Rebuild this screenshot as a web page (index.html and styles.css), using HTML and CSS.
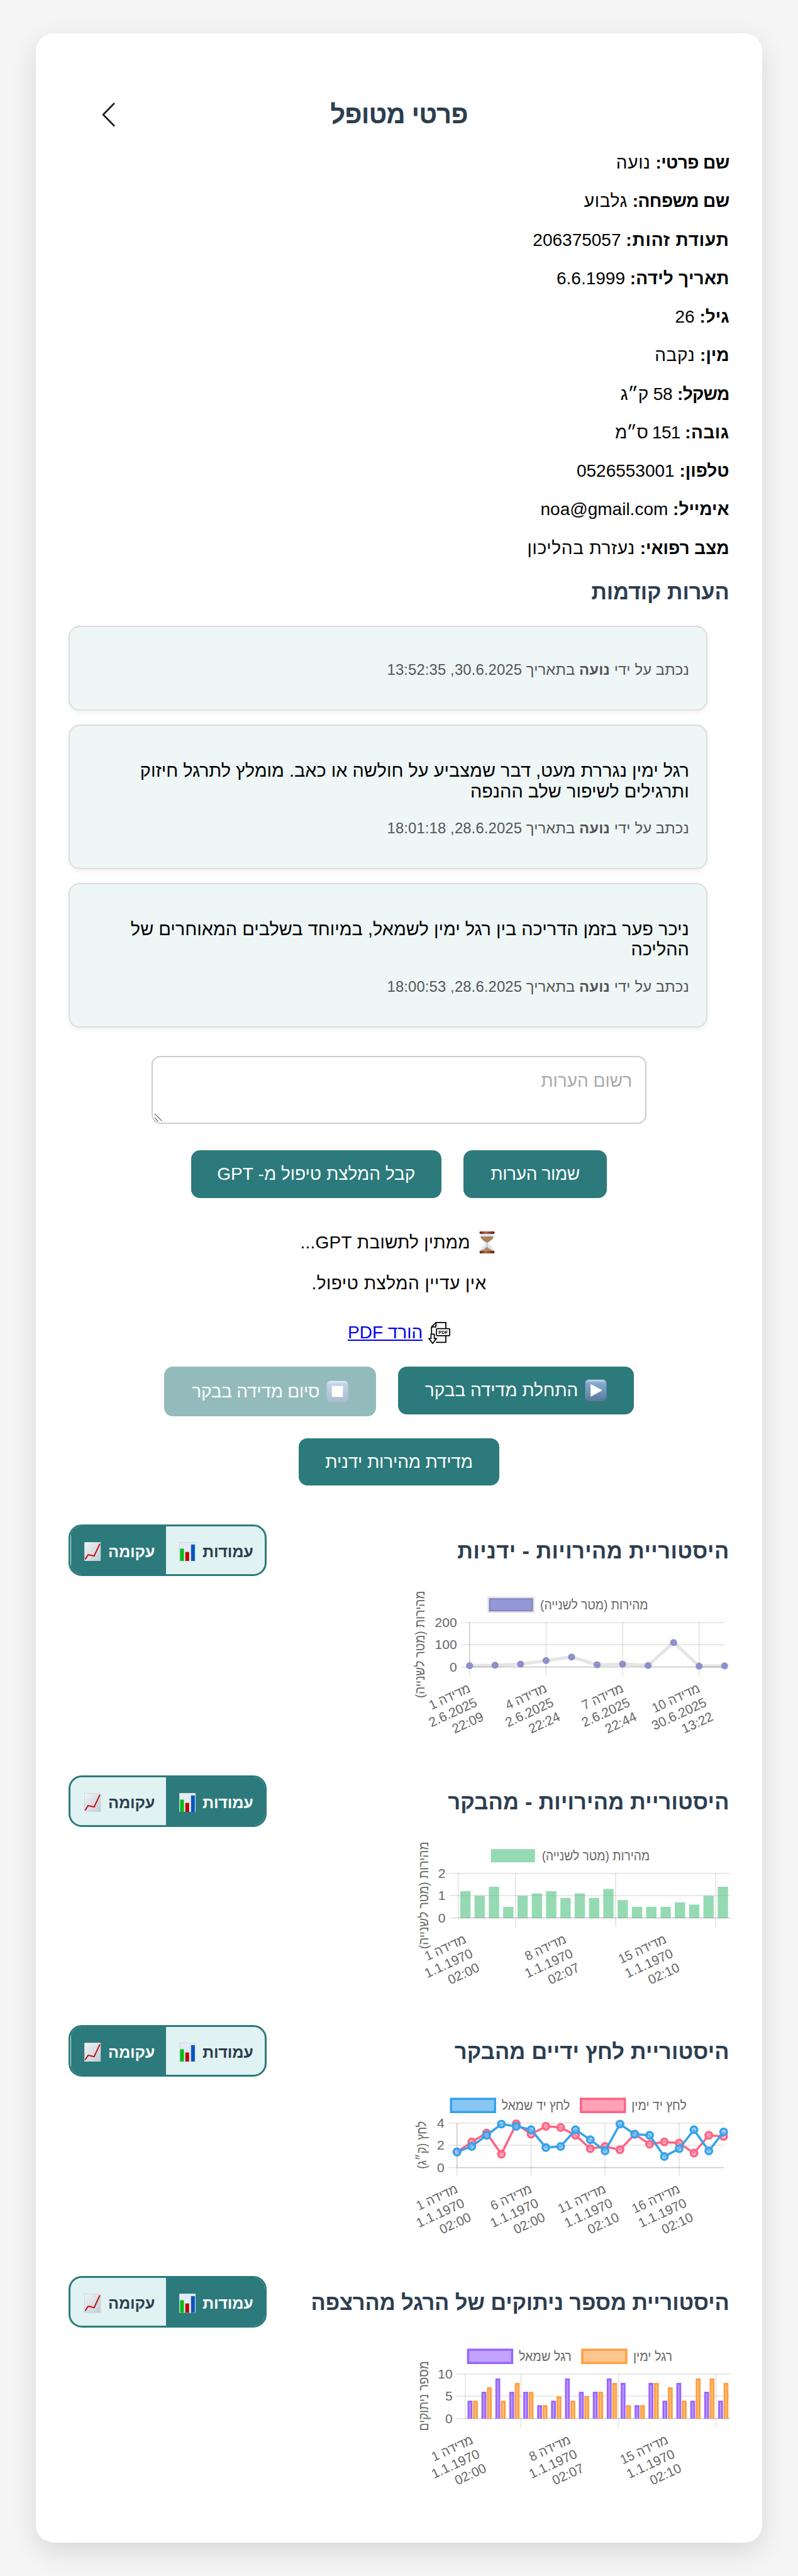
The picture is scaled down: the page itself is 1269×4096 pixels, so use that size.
FILE: index.html
```html
<!DOCTYPE html>
<html lang="he" dir="rtl">
<head>
<meta charset="utf-8">
<title>פרטי מטופל</title>
<link rel="stylesheet" href="styles.css">
</head>
<body>
<svg class="defs" width="0" height="0" aria-hidden="true">
  <defs>
    <linearGradient id="key" x1="0" y1="0" x2="0" y2="1"><stop offset="0" stop-color="#c9e2f4"/><stop offset=".16" stop-color="#84aacc"/><stop offset=".5" stop-color="#7398bc"/><stop offset="1" stop-color="#5b7797"/></linearGradient>
    <linearGradient id="paper" x1="0" y1="0" x2="1" y2="1"><stop offset="0" stop-color="#f0f4f8"/><stop offset="1" stop-color="#c3cbd3"/></linearGradient>
    <linearGradient id="wood" x1="0" x2="1" y1="0" y2="0"><stop offset="0" stop-color="#5e2412"/><stop offset=".4" stop-color="#b56a43"/><stop offset="1" stop-color="#5e2412"/></linearGradient>
    <symbol id="bars" viewBox="0 0 30 35"><rect width="30" height="35" fill="#e3ebf4" stroke="#bcc8d0" stroke-width="1"/><rect x="1.5" y="12" width="7" height="23" fill="#05bd12"/><rect x="11" y="18" width="7" height="17" fill="#bd0505"/><rect x="21.500" y="4.500" width="7" height="30.500" fill="#0556bd"/></symbol>
    <symbol id="curve" viewBox="0 0 30 35"><rect width="30" height="35" fill="url(#paper)" stroke="#bcc4cc" stroke-width="1"/><path d="M1.500 31.500 7 23l11 2.500L28.500 3" fill="none" stroke="#c20a0a" stroke-width="2.200"/></symbol>
  </defs>
</svg>
<main class="card">
  <header class="head">
    <h2 class="title">פרטי מטופל</h2>
    <svg class="back" viewBox="0 0 12 22"><path d="M11 1 1.200 11 11 21" fill="none" stroke="#1c1c1e" stroke-width="1.500" stroke-linecap="round" stroke-linejoin="round"/></svg>
  </header>
  <section class="facts">
    <p><b>שם פרטי:</b> <span>נועה</span></p>
    <p><b>שם משפחה:</b> <span>גלבוע</span></p>
    <p><b>תעודת זהות:</b> 206375057</p>
    <p><b>תאריך לידה:</b> 6.6.1999</p>
    <p><b>גיל:</b> 26</p>
    <p><b>מין:</b> <span>נקבה</span></p>
    <p><b>משקל:</b> <span>58 ק״ג</span></p>
    <p><b>גובה:</b> <span>151 ס״מ</span></p>
    <p><b>טלפון:</b> 0526553001</p>
    <p><b>אימייל:</b> <bdo dir="ltr">noa@gmail.com</bdo></p>
    <p><b>מצב רפואי:</b> <span>נעזרת בהליכון</span></p>
  </section>
  <h3 class="sub">הערות קודמות</h3>
  <section class="notes">
    <article class="note"><p class="meta">נכתב על ידי <b>נועה</b> בתאריך 30.6.2025, 13:52:35</p></article>
    <article class="note"><p class="text">רגל ימין נגררת מעט, דבר שמצביע על חולשה או כאב. מומלץ לתרגל חיזוק<br>ותרגילים לשיפור שלב ההנפה</p><p class="meta">נכתב על ידי <b>נועה</b> בתאריך 28.6.2025, 18:01:18</p></article>
    <article class="note"><p class="text">ניכר פער בזמן הדריכה בין רגל ימין לשמאל, במיוחד בשלבים המאוחרים של<br>ההליכה</p><p class="meta">נכתב על ידי <b>נועה</b> בתאריך 28.6.2025, 18:00:53</p></article>
  </section>
  <div class="field">
    <span class="placeholder">רשום הערות</span>
    <svg class="grip" viewBox="0 0 8 8"><path d="M.5.500 7.500 7.500M.5 4.500 4 8" stroke="#555" stroke-width=".7"/></svg>
  </div>
  <div class="row"><button class="btn save">שמור הערות</button><button class="btn ask">קבל המלצת טיפול מ- GPT</button></div>
  <p class="line wait"><svg class="emoji" viewBox="0 0 40 40"><path d="M8 3c0 10 8 12 10 17-2 5-10 7-10 17h24c0-10-8-12-10-17 2-5 10-7 10-17z" fill="#dfe6f3"/><path d="M8 9h24c-1 6-7 8-10 11h-4c-3-3-9-5-10-11z" fill="#a8825f"/><path d="M20 21v9" stroke="#c9a376" stroke-width="1"/><path d="M10 35c3-2 7-4 10-7 3 3 7 5 10 7z" fill="#b08a55"/><rect x="6.500" y="0" width="27" height="4.500" rx="1.500" fill="url(#wood)"/><rect x="6.500" y="35" width="27" height="5" rx="1.500" fill="url(#wood)"/></svg><span>ממתין לתשובת GPT...</span></p>
  <p class="line none"><span>אין עדיין המלצת טיפול.</span></p>
  <p class="line pdf"><svg class="emoji" viewBox="0 0 40 40" fill="none" stroke="#000" stroke-width="2"><path d="M6 21V9l8-8h18v11M32 25v12H14M6 9h8V1"/><rect x="15" y="12" width="24" height="13" rx="1.500"/><path d="M5 22h6v8h4l-7 9-7-9h4z" fill="#fff"/><text x="27" y="22" class="pdf-tag">PDF</text></svg><a href="#">הורד PDF</a></p>
  <div class="row second">
    <button class="btn start"><svg class="emoji" viewBox="0 0 40 40"><rect x=".5" y=".5" width="39" height="39" rx="7" fill="url(#key)" stroke="#5f7d9c"/><path d="M11 9.500v21.500L31 20z" fill="#fff" stroke="#fff" stroke-linejoin="round"/></svg><span>התחלת מדידה בבקר</span></button>
    <button class="btn stop" disabled><svg class="emoji" viewBox="0 0 40 40"><rect x=".5" y=".5" width="39" height="39" rx="7" fill="url(#key)" stroke="#5f7d9c"/><rect x="10" y="10" width="20" height="20" fill="#fff"/></svg><span>סיום מדידה בבקר</span></button>
  </div>
  <div class="row third"><button class="btn manual">מדידת מהירות ידנית</button></div>

  <section class="history by-hand">
    <div class="bar"><h3>היסטוריית מהירויות - ידניות</h3><div class="toggle"><span class="opt"><span>עמודות</span><svg><use href="#bars"/></svg></span><span class="opt on"><span>עקומה</span><svg><use href="#curve"/></svg></span></div></div>
    <svg class="chart" id="manual" viewBox="725 0 600 300"></svg>
  </section>
  <section class="history by-walker">
    <div class="bar"><h3>היסטוריית מהירויות - מהבקר</h3><div class="toggle"><span class="opt on"><span>עמודות</span><svg><use href="#bars"/></svg></span><span class="opt"><span>עקומה</span><svg><use href="#curve"/></svg></span></div></div>
    <svg class="chart" id="speed" viewBox="725 0 600 300"></svg>
  </section>
  <section class="history hands">
    <div class="bar"><h3>היסטוריית לחץ ידיים מהבקר</h3><div class="toggle"><span class="opt"><span>עמודות</span><svg><use href="#bars"/></svg></span><span class="opt on"><span>עקומה</span><svg><use href="#curve"/></svg></span></div></div>
    <svg class="chart" id="pressure" viewBox="725 0 600 300"></svg>
  </section>
  <section class="history feet">
    <div class="bar"><h3>היסטוריית מספר ניתוקים של הרגל מהרצפה</h3><div class="toggle"><span class="opt on"><span>עמודות</span><svg><use href="#bars"/></svg></span><span class="opt"><span>עקומה</span><svg><use href="#curve"/></svg></span></div></div>
    <svg class="chart" id="lifts" viewBox="725 0 600 300"></svg>
  </section>
</main>
<script src="charts.js"></script>
</body>
</html>
```
FILE: styles.css
```css
html { font-size: 17.5px; }
* { box-sizing: border-box; }
body { margin: 0; padding: 3rem 3.25rem 0; background: #f5f5f5; font: 1.6rem/1.2 "Liberation Sans", Arial, sans-serif; color: #000; height: 4096px; overflow: hidden; }
.defs { position: absolute; }
p, h2, h3 { margin: 0; }
.card { height: 228rem; padding: 3rem; background: #fff; border-radius: 1.6rem; box-shadow: 0 .8rem 2.4rem rgba(0,0,0,.12); }
.head { display: grid; grid-template-columns: 1fr auto 1fr; align-items: center; height: 7.04rem; padding-top: 1.8rem; }
.title { grid-column: 2; font-size: 2.4rem; letter-spacing: -1px; color: #2c3e50; }
.back { justify-self: end; width: 1.2rem; height: 2.2rem; margin-left: 3.02rem; }
.facts p { height: 3.5rem; line-height: 3.54rem; }
.facts p:nth-child(1) b, .facts p:nth-child(2) b { letter-spacing: -.6px; }
.facts p:nth-child(3) b { letter-spacing: .84px; }
.facts p:nth-child(4) b { letter-spacing: .23px; }
.facts p:nth-child(7) b { letter-spacing: -.73px; }
.facts p:nth-child(8) b { letter-spacing: .46px; }
.facts p span { letter-spacing: .7px; }
.facts p:nth-child(7) span { letter-spacing: -.26px; }
.facts p:nth-child(8) span { letter-spacing: -.77px; }
.sub { height: 4.52rem; line-height: 4.52rem; font-size: 1.97rem; letter-spacing: -.16px; color: #2c3e50; }
.notes { display: grid; gap: 1.24rem; margin: .79rem 2rem 0 0; }
.note { padding: 3.12rem 1.53rem 2.8rem; background: #eef6f6; border: 2px solid #ddd; border-radius: 1rem; box-shadow: 0 .2rem .4rem rgba(0,0,0,.05); white-space: nowrap; }
.text { font-size: 1.65rem; line-height: 1.875rem; margin-bottom: 1.65rem; letter-spacing: .03px; }
.meta { font-size: 1.36rem; line-height: 1.6rem; letter-spacing: .14px; color: #555; }
.field { position: relative; width: 45rem; height: 6.2rem; margin: 2.57rem auto 0; padding: 1.2rem; border: 2px solid #ccc; border-radius: .8rem; color: #a9a9a9; }
.grip { position: absolute; left: .15rem; bottom: .15rem; width: .75rem; height: .75rem; }
.row { display: flex; justify-content: center; gap: 2rem; height: 4.3rem; margin-top: 2.4rem; }
.btn { display: flex; align-items: center; justify-content: center; gap: .6rem; height: 4.3rem; padding: 0; border: 0; border-radius: .8rem; background: #2c7a7b; color: #fff; font: inherit; white-space: nowrap; }
.emoji { width: 2rem; height: 2rem; }
.save { width: 13.05rem; letter-spacing: -.36px; }
.ask { width: 22.75rem; }
.start { width: 21.43rem; }
.stop { width: 19.23rem; height: 4.5rem; letter-spacing: -.22px; opacity: .5; }
.manual { width: 18.22rem; letter-spacing: -.15px; }
.line { display: flex; align-items: center; justify-content: center; gap: .5rem; height: 2rem; }
.wait { margin-top: 3.05rem; letter-spacing: .24px; }
.none { margin-top: 1.72rem; letter-spacing: .5px; }
.pdf { margin-top: 2.48rem; }
.pdf-tag { font: bold 8.5px "Liberation Sans", sans-serif; fill: #000; stroke: none; text-anchor: middle; direction: ltr; }
.second { margin-top: 2.1rem; }
.third { margin-top: 2.2rem; margin-bottom: 3.5rem; }
.history { height: 22.82rem; }
.by-walker { height: 22.68rem; }
.bar { display: flex; justify-content: space-between; height: 4.7rem; }
.bar h3 { font-size: 1.97rem; line-height: 4.88rem; color: #2c3e50; white-space: nowrap; }
.by-hand h3 { letter-spacing: .4px; }
.by-walker h3 { letter-spacing: .18px; }
.hands h3 { letter-spacing: .1px; }
.feet h3 { letter-spacing: -.16px; }
.toggle { display: flex; width: 17.95rem; border: .2rem solid #2c7a7b; border-radius: 1.2rem; overflow: hidden; background: #e0f2f1; color: #2c3e50; font-size: 1.44rem; font-weight: bold; letter-spacing: -.2px; }
.opt { display: flex; align-items: center; justify-content: space-between; width: 8.6rem; padding: .25rem 1.02rem 0 1.2rem; }
.opt:first-child { width: 8.95rem; }
.opt svg { width: 1.5rem; height: 1.74rem; }
.opt.on { background: #2c7a7b; color: #fff; }
.chart { display: block; width: 30rem; height: 15rem; margin-top: 1.3rem; overflow: visible; font: 24px "Liberation Sans", Arial, sans-serif; }
.chart text { fill: #666; stroke: none; }
```
FILE: charts.js
```js
const ZERO = 139, SPAN = 81;

const shape = (name, attrs) =>
  `<${name} ${Object.entries(attrs).map(([k, v]) => `${k}="${v}"`).join(' ')}/>`;
const label = (x, y, text, width) =>
  `<text x="${x}" y="${y}" direction="rtl" textLength="${width}" lengthAdjust="spacingAndGlyphs">${text}</text>`;

function frame(c) {
  let out = '';
  c.ticks.forEach((t, i) => {
    const y = ZERO - i * SPAN / 2;
    out += shape('path', { d: `M${c.left - 16} ${y}H${c.right}`, stroke: 'rgba(0,0,0,.1)', 'stroke-width': 2 });
    out += `<text x="${c.left - 23}" y="${y + 8}" direction="ltr" text-anchor="end">${t}</text>`;
  });
  c.lines.forEach(x => {
    out += shape('path', { d: `M${x} 58V${x === c.left && c.bars ? 139 : 155}`, stroke: 'rgba(0,0,0,.1)', 'stroke-width': 2 });
  });
  c.labels.forEach(([x, rows]) => {
    out += `<g transform="translate(${x} 155) rotate(-25)">` +
      rows.map((r, i) => i ? `<text x="-9" y="${27 + i * 28.5}" direction="ltr" text-anchor="end">${r}</text>` : label(-9, 27, r, 80 + (r.length - 7) * 13)).join('') + '</g>';
  });
  out += `<g transform="translate(${c.titleX} 98) rotate(-90)">${label(c.titleW / 2, 0, c.title, c.titleW)}</g>`;
  c.legend.forEach(l => {
    out += shape('rect', { x: l.x, y: 14, width: 80, height: 24, fill: l.fill, stroke: l.stroke || 'none', 'stroke-width': l.sw || 0 });
    out += label(l.right, 34, l.text, l.w);
  });
  return out;
}
const axes = c => shape('path', { d: `M${c.left} ${ZERO}H${c.right}`, stroke: 'rgba(0,0,0,.1)', 'stroke-width': 2 }) +
  (c.bars ? '' : shape('path', { d: `M${c.left} 58V${ZERO}`, stroke: 'rgba(0,0,0,.1)', 'stroke-width': 2 }));

function series(c, values, max, stroke, sw, fill, dotStroke, dotSw) {
  const step = (c.right - c.left) / (values.length - 1);
  const pts = values.map((v, i) => [c.left + i * step, ZERO - v * SPAN / max]);
  return shape('polyline', { points: pts.join(' '), fill: 'none', stroke, 'stroke-width': sw }) +
    pts.map(p => shape('circle', { cx: p[0], cy: p[1], r: 6, fill, stroke: dotStroke, 'stroke-width': dotSw })).join('');
}
const put = (id, html) => { document.getElementById(id).innerHTML = html; };

const manual = { left: 852.7, right: 1316.2, ticks: [0, 100, 200], lines: [852.7, 991.8, 1130.8, 1269.9],
  labels: [[852.7, ['מדידה 1', '2.6.2025', '22:09']], [991.8, ['מדידה 4', '2.6.2025', '22:24']], [1130.8, ['מדידה 7', '2.6.2025', '22:44']], [1269.9, ['מדידה 10', '30.6.2025', '13:22']]],
  title: 'מהירות (מטר לשנייה)', titleX: 770.4, titleW: 195,
  legend: [{ x: 888, fill: '#9498d8', stroke: 'rgba(0,0,0,.1)', sw: 6, right: 1177, w: 196, text: 'מהירות (מטר לשנייה)' }] };
put('manual', frame(manual) + axes(manual) + series(manual, [6, 8, 13, 29, 45, 10, 13, 7, 110, 4, 5], 200, 'rgba(0,0,0,.1)', 6, '#8d91d2', 'rgba(0,0,0,.1)', 2));

const speed = { left: 832, right: 1326, bars: true, ticks: [0, 1, 2], lines: [832, 936, 1118, 1300],
  labels: [[845, ['מדידה 1', '1.1.1970', '02:00']], [1027, ['מדידה 8', '1.1.1970', '02:07']], [1209, ['מדידה 15', '1.1.1970', '02:10']]],
  title: 'מהירות (מטר לשנייה)', titleX: 777, titleW: 195,
  legend: [{ x: 891.5, fill: 'rgba(78,193,128,.6)', right: 1180, w: 196, text: 'מהירות (מטר לשנייה)' }] };
put('speed', frame(speed) + [1.2, 1, 1.4, .5, 1, 1.1, 1.2, .9, 1.1, .9, 1.3, .8, .5, .5, .5, .7, .6, 1, 1.4].map((v, i) =>
  shape('rect', { x: 835.7 + i * 26, y: ZERO - v * 40.5, width: 18.7, height: v * 40.5, fill: 'rgba(78,193,128,.6)' })).join('') + axes(speed));

const pressure = { left: 829.8, right: 1314.4, ticks: [0, 2, 4], lines: [829.8, 964.4, 1099, 1233.6],
  labels: [[829.8, ['מדידה 1', '1.1.1970', '02:00']], [964.4, ['מדידה 6', '1.1.1970', '02:00']], [1099, ['מדידה 11', '1.1.1970', '02:10']], [1233.6, ['מדידה 16', '1.1.1970', '02:10']]],
  title: 'לחץ (ק״ג)', titleX: 774.5, titleW: 87,
  legend: [{ x: 819, fill: '#88c7f4', stroke: '#36a2eb', sw: 4, right: 1035, w: 124, text: 'לחץ יד שמאל' }, { x: 1055, fill: '#ffa1b5', stroke: '#ff6384', sw: 4, right: 1247, w: 100, text: 'לחץ יד ימין' }] };
put('pressure', frame(pressure) + axes(pressure) +
  series(pressure, [1.4, 2.3, 3.1, 1.2, 3.93, 3, 3.7, 3.6, 2.9, 1.7, 1.9, 1.6, 3, 2.1, 2.3, 2.2, 1.3, 2.9, 2.8], 4, '#ff6384', 4, 'rgba(255,161,181,.6)', '#ff6384', 4) +
  series(pressure, [1.4, 1.9, 2.9, 3.9, 3.7, 3.4, 1.8, 1.9, 3.4, 2.5, 1.5, 3.9, 3, 2.9, 1, 1.7, 3.4, 1.5, 3.2], 4, '#36a2eb', 4, 'rgba(136,199,244,.6)', '#36a2eb', 4));

const lifts = { left: 844.8, right: 1326, bars: true, ticks: [0, 5, 10], lines: [844.8, 946.1, 1123.4, 1300.7],
  labels: [[857.5, ['מדידה 1', '1.1.1970', '02:00']], [1034.8, ['מדידה 8', '1.1.1970', '02:07']], [1212.1, ['מדידה 15', '1.1.1970', '02:10']]],
  title: 'מספר ניתוקים', titleX: 777, titleW: 127,
  legend: [{ x: 850, fill: '#c2a3ff', stroke: '#9966ff', sw: 4, right: 1038, w: 96, text: 'רגל שמאל' }, { x: 1057.5, fill: '#ffc58c', stroke: '#ff9f40', sw: 4, right: 1221, w: 71, text: 'רגל ימין' }] };
const bar = (x, v, solid, light) => shape('rect', { x, y: ZERO - v * 8.1, width: 8.8, height: v * 8.1, fill: solid }) +
  shape('rect', { x: x + 3.4, y: ZERO - v * 8.1 + 3.4, width: 2, height: v * 8.1 - 3.4, fill: light });
const leftFoot = [4, 6, 9, 6, 6, 3, 4, 9, 6, 6, 9, 8, 3, 8, 4, 8, 4, 6, 4];
const rightFoot = [4, 7, 4, 8, 6, 3, 5, 4, 5, 6, 8, 3, 3, 8, 7, 4, 9, 9, 8];
put('lifts', frame(lifts) + leftFoot.map((v, i) =>
  bar(849 + i * 25.3, v, '#9966ff', '#c2a3ff') + bar(858.9 + i * 25.3, rightFoot[i], '#ff9f40', '#ffc58c')).join('') + axes(lifts));
```
